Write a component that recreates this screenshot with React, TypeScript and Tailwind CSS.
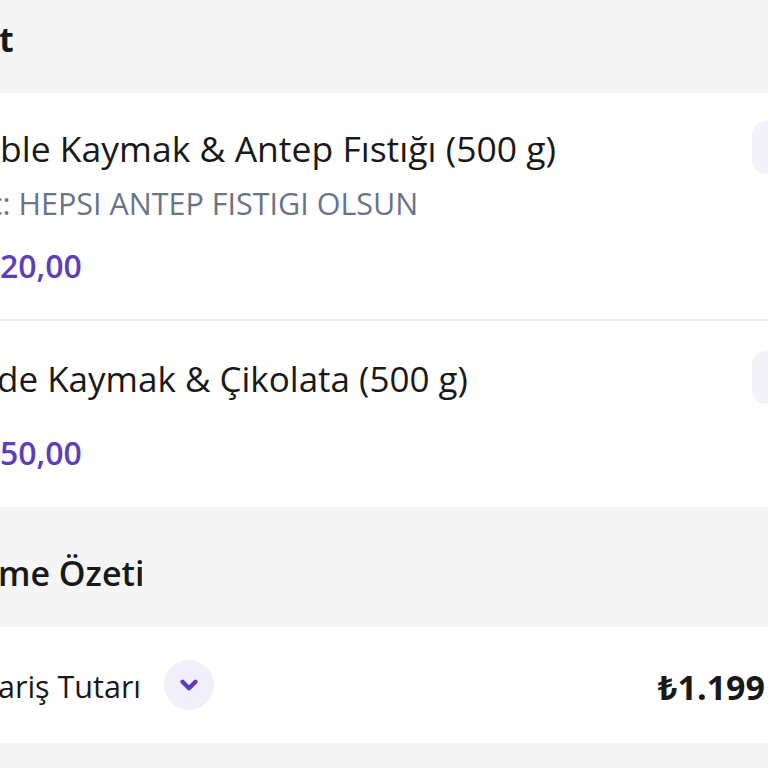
import { ChevronDown } from "lucide-react";

const font = { fontFamily: '"Open Sans", "Noto Sans", sans-serif' };

function QtyBox() {
  return <div className="ml-auto h-[53px] w-[16px] shrink-0 rounded-l-[14px] bg-[#f3f2fa]" />;
}

export default function App() {
  return (
    <div className="h-[768px] w-[768px] overflow-hidden bg-[#f5f5f5] text-[#191919]" style={font}>
      <div className="flex h-[93px] items-start pt-[19px]">
        <h2 className="-ml-[1px] text-[34px] font-bold leading-[40px]">t</h2>
      </div>

      <section className="bg-white">
        <div className="flex h-[228px] items-start border-b-2 border-[#f0f0f0] pt-[28px]">
          <div className="flex flex-col">
            <span className="text-[35.5px] leading-[54px] whitespace-nowrap">ble Kaymak &amp; Antep Fıstığı (500 g)</span>
            <span className="-ml-[12px] text-[30.5px] leading-[56px] whitespace-nowrap text-[#697488]">c: HEPSI ANTEP FISTIGI OLSUN</span>
            <span className="text-[32px] font-semibold leading-[70px] text-[#5d3ebc]">20,00</span>
          </div>
          <QtyBox />
        </div>
        <div className="flex h-[186px] items-start pt-[30px]">
          <div className="flex flex-col">
            <span className="-ml-[3px] text-[35px] leading-[56px] whitespace-nowrap">de Kaymak &amp; Çikolata (500 g)</span>
            <span className="mt-[16px] text-[32px] font-semibold leading-[60px] text-[#5d3ebc]">50,00</span>
          </div>
          <QtyBox />
        </div>
      </section>

      <div className="flex h-[120px] items-start pt-[46px]">
        <h2 className="-ml-[2px] text-[34px] font-semibold leading-[40px]">me Özeti</h2>
      </div>

      <div className="flex h-[116px] items-center bg-white pt-[4px]">
        <span className="-ml-[2px] text-[30.5px] whitespace-nowrap">ariş Tutarı</span>
        <span className="ml-[23px] -mt-[4px] flex h-[50px] w-[50px] items-center justify-center rounded-full bg-[#f1eff9]">
          <ChevronDown className="h-[26px] w-[26px] text-[#5d3ebc]" strokeWidth={4} />
        </span>
        <span className="ml-auto pr-[3px] text-[34px] font-bold whitespace-nowrap">₺1.199</span>
      </div>
    </div>
  );
}
